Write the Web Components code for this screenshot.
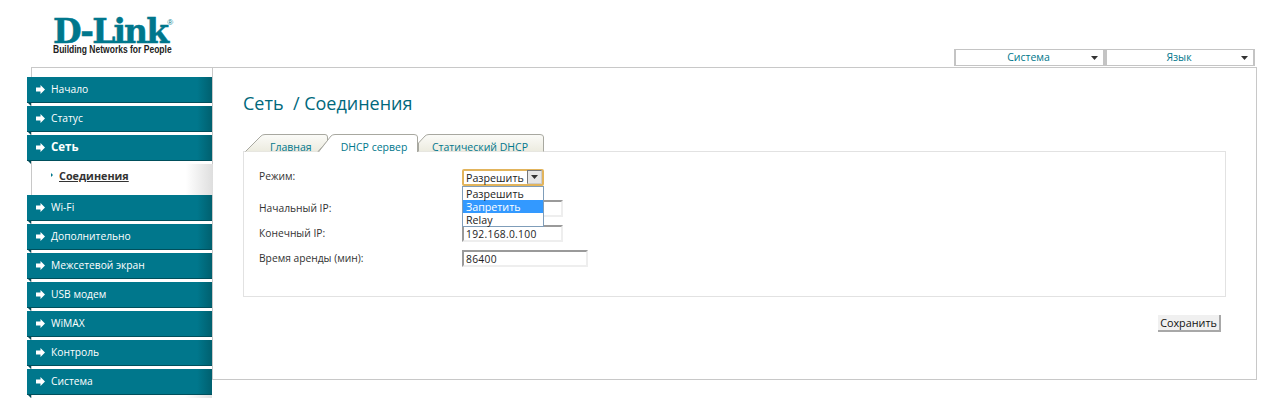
<!DOCTYPE html>
<html lang="ru">
<head>
<meta charset="utf-8">
<title>D-Link</title>
<style>
  html, body { margin: 0; background: #fff; }
  body { font: 10.25px "Open Sans", "DejaVu Sans", sans-serif; color: #333; width: 1271px; height: 414px; overflow: hidden; }
</style>
</head>
<body>
<router-page>
  <router-header slot="header"></router-header>
  <side-menu slot="menu">
    <menu-item>Начало</menu-item>
    <menu-item>Статус</menu-item>
    <menu-item active>Сеть</menu-item>
    <sub-item>Соединения</sub-item>
    <menu-item>Wi-Fi</menu-item>
    <menu-item>Дополнительно</menu-item>
    <menu-item>Межсетевой экран</menu-item>
    <menu-item>USB модем</menu-item>
    <menu-item>WiMAX</menu-item>
    <menu-item>Контроль</menu-item>
    <menu-item>Система</menu-item>
  </side-menu>
  <content-panel slot="content">
    <page-title>Сеть &nbsp;/ Соединения</page-title>
    <tab-bar>
      <tab-item shape="first" w="83">Главная</tab-item>
      <tab-item shape="active" w="100">DHCP сервер</tab-item>
      <tab-item shape="last" w="126">Статический DHCP</tab-item>
    </tab-bar>
    <form-box>
      <form-row label="Режим:" first><drop-select value="Разрешить"></drop-select></form-row>
      <form-row label="Начальный IP:"><text-field w="101"></text-field></form-row>
      <form-row label="Конечный IP:"><text-field w="101" value="192.168.0.100"></text-field></form-row>
      <form-row label="Время аренды (мин):"><text-field w="126" value="86400"></text-field></form-row>
    </form-box>
    <save-bar>Сохранить</save-bar>
  </content-panel>
</router-page>

<script>
function define(name, css, html, init) {
  customElements.define(name, class extends HTMLElement {
    constructor() {
      super();
      this.attachShadow({ mode: 'open' }).innerHTML = '<style>' + css + '</style>' + html;
    }
    connectedCallback() {
      if (init) init(this, this.shadowRoot);
    }
  });
}

const arrow = '<svg width="7" height="4" viewBox="0 0 7 4"><path d="M0 0h7L3.500 4z" fill="#333"/></svg>';

define('router-page', `
  :host { display: block; }
  .main { display: flex; align-items: flex-start; }
`, `
  <slot name="header"></slot>
  <div class="main"><slot name="menu"></slot><slot name="content"></slot></div>
`);

define('router-header', `
  :host { display: flex; justify-content: space-between; align-items: flex-start; height: 67px; }
  .logo { margin: 17px 0 0 53px; width: 122px; color: #00778c; }
  .name { font: bold 33px/29px "DejaVu Serif", serif; letter-spacing: -1.900px; height: 27px; white-space: nowrap; -webkit-text-stroke: 0.5px #00778c; }
  .name sup { font: 8px/8px "Liberation Sans", sans-serif; letter-spacing: 0; vertical-align: 18px; -webkit-text-stroke: 0; }
  .tag { font: bold 10.500px/11px "Liberation Sans", sans-serif; color: #222; white-space: nowrap; transform: scaleX(0.81); transform-origin: left center; }
  .menus { display: flex; margin: 49px 16px 0 0; }
  .menu { box-sizing: border-box; width: 151px; height: 17px; padding-right: 2px; border: 2px solid #c4c4c4; border-width: 1px 2px; position: relative; text-align: center; font-size: 10.500px; line-height: 15px; color: #00778c; }
  .menu:last-child { width: 150px; }
  .menu svg { position: absolute; right: 5px; top: 6px; }
`, `
  <div class="logo"><div class="name">D-Link<sup>®</sup></div><div class="tag">Building Networks for People</div></div>
  <div class="menus"><div class="menu">Система${arrow}</div><div class="menu">Язык${arrow}</div></div>
`);

define('side-menu', `
  :host { display: block; box-sizing: border-box; width: 181px; margin-left: 31px; padding-top: 9px; border-left: 1px solid #c8c8c8; border-top: 1px solid #c8c8c8; position: relative; height: 331px; }
  .tail { position: absolute; left: 0; right: 0; bottom: 0; height: 3px; background: linear-gradient(to right, #fff 85%, #e2e2e2); }
`, `<slot></slot><div class="tail"></div>`);

define('menu-item', `
  :host { display: flex; align-items: center; box-sizing: border-box; width: 185px; height: 26px; margin: 0 0 3px -5px; padding: 0 0 2px 9px; gap: 6px; position: relative; color: #fff;
    background: linear-gradient(to right, #00778c 92%, #00606f); border-bottom: 1px solid #004f5c; }
  :host([active]) { font-weight: bold; font-size: 11.500px; }
  .fold { position: absolute; left: 0; top: 25px; width: 0; height: 0; border-top: 4px solid #004f5c; border-left: 4px solid transparent; }
  svg { flex: none; margin-top: 2px; }
`, `
  <svg width="9" height="9" viewBox="0 0 9 9"><path d="M0 2.500h4.500V0L9 4.500 4.500 9V6.500H0z" fill="#fff"/></svg>
  <slot></slot><div class="fold"></div>
`);

define('sub-item', `
  :host { display: flex; align-items: center; box-sizing: border-box; width: 181px; height: 31px; padding: 0 0 9px 19px; gap: 6px; font-weight: bold; font-size: 10.800px; color: #333; text-decoration: underline;
    background: linear-gradient(to right, #fff 85%, #dedede); }
  .mark { width: 0; height: 0; border-left: 2px solid #00778c; border-top: 2px solid transparent; border-bottom: 2px solid transparent; }
`, `<div class="mark"></div><slot></slot>`);

define('content-panel', `
  :host { display: block; box-sizing: border-box; width: 1045px; height: 313px; border: 1px solid #c8c8c8; padding: 0 30px; }
`, `<slot></slot>`);

define('page-title', `
  :host { display: block; height: 66px; padding-top: 23px; box-sizing: border-box; font-size: 18px; line-height: 24px; color: #00687c; }
`, `<slot></slot>`);

define('tab-bar', `
  :host { display: flex; height: 17px; margin-left: 2px; }
`, `<slot></slot>`);

define('tab-item', `
  :host { display: block; position: relative; height: 17px; font-size: 10.500px; line-height: 16px; color: #00778c; overflow: visible; }
  svg { position: absolute; left: 0; top: 0; }
  span { position: relative; display: block; text-align: center; white-space: nowrap; }
`, `<svg height="18"><defs><linearGradient id="g" x1="0" y1="0" x2="0" y2="1"><stop offset="0" stop-color="#fbfbf8"/><stop offset="1" stop-color="#ecebdf"/></linearGradient></defs><path/></svg><span><slot></slot></span>`, (el, root) => {
  const w = +el.getAttribute('w');
  const shape = el.getAttribute('shape');
  const svg = root.querySelector('svg');
  const path = root.querySelector('path');
  const span = root.querySelector('span');
  svg.setAttribute('width', w);
  el.style.width = w + 'px';
  span.style.paddingTop = '5px';
  if (shape === 'first') {
    el.style.width = '73px';
    span.style.paddingLeft = '25px';
    span.style.width = '41px';
    path.setAttribute('d', 'M0.500 17.500L16 2Q17.500 0.500 20 0.500H80Q82.500 0.500 82.500 3V7L73 17.500');
    path.setAttribute('fill', 'url(#g)');
  } else if (shape === 'active') {
    span.style.paddingLeft = '12px';
    span.style.boxSizing = 'border-box';
    path.setAttribute('d', 'M0.500 18L13 2Q14.500 0.500 17 0.500H96Q99.500 0.500 99.500 3V18');
    path.setAttribute('fill', '#fff');
  } else {
    span.style.paddingRight = '2px';
    span.style.boxSizing = 'border-box';
    path.setAttribute('d', 'M0.500 17.500V9L7 2Q8.500 0.500 11 0.500H122Q125.500 0.500 125.500 3V17.500');
    path.setAttribute('fill', 'url(#g)');
  }
  path.setAttribute('stroke', '#a8a8a0');
});

define('form-box', `
  :host { display: block; box-sizing: border-box; height: 146px; margin-bottom: 18px; padding: 17px 15px 0; border: 1px solid #e2e2e2; }
`, `<slot></slot>`);

define('form-row', `
  :host { display: flex; align-items: center; height: 17px; margin-bottom: 8px; }
  :host([first]) { margin-bottom: 14px; }
  label { width: 203px; flex: none; padding-bottom: 2px; }
  :host([first]) label { padding-bottom: 3px; }
`, `<label></label><slot></slot>`, (el, root) => {
  root.querySelector('label').textContent = el.getAttribute('label');
});

define('drop-select', `
  :host { display: block; position: relative; box-sizing: border-box; width: 82px; height: 17px; border: 2px solid #e2b45c; border-radius: 2px; background: #fff; color: #222; z-index: 2; font-size: 10.700px; }
  .value { padding-left: 2px; line-height: 14px; }
  .btn { position: absolute; right: 0; top: -1px; width: 15px; height: 14px; box-sizing: border-box; background: #e6e6e6; border: 1px solid; border-color: #777 #ccc #ccc #777; display: flex; align-items: center; justify-content: center; }
  .list { position: absolute; left: -2px; top: 15px; width: 82px; box-sizing: border-box; border: 1px solid #7f9db9; background: #fff; }
  .opt { height: 13px; line-height: 15px; padding-left: 3px; }
  .opt.sel { background: #3399ff; color: #fff; }
`, `
  <div class="value"></div><div class="btn">${arrow}</div>
  <div class="list"><div class="opt">Разрешить</div><div class="opt sel">Запретить</div><div class="opt">Relay</div></div>
`, (el, root) => {
  root.querySelector('.value').textContent = el.getAttribute('value');
});

define('text-field', `
  :host { display: block; box-sizing: border-box; height: 17px; padding-left: 2px; line-height: 14px; border: 2px solid; border-color: #9a9a9a #eee #eee #9a9a9a; color: #222; letter-spacing: 0.3px; background: #fff; }
`, `<span></span>`, (el, root) => {
  el.style.width = el.getAttribute('w') + 'px';
  root.querySelector('span').textContent = el.getAttribute('value') || '';
});

define('save-bar', `
  :host { display: flex; justify-content: flex-end; padding-right: 5px; }
  button { box-sizing: border-box; width: 63px; height: 17px; padding: 0; font: inherit; font-size: 10.800px; color: #111; background: #f0f0f0; border: 0; border-right: 2px solid #a8a8a8; border-bottom: 2px solid #a8a8a8; }
`, `<button><slot></slot></button>`);
</script>
</body>
</html>
